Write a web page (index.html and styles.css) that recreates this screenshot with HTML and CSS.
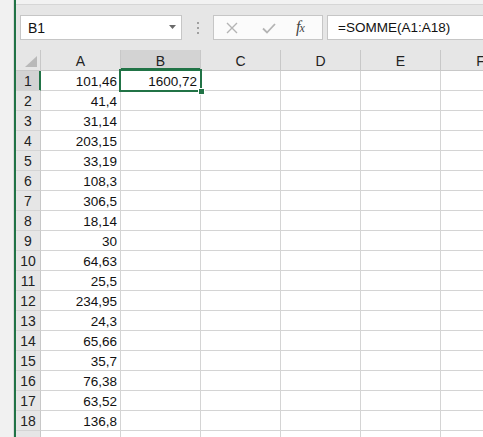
FILE: index.html
```html
<!DOCTYPE html>
<html lang="fr">
<head>
<meta charset="utf-8">
<title>Excel</title>
<link rel="stylesheet" href="styles.css">
</head>
<body>
<div class="app">
  <div class="side"></div>
  <div class="edge"></div>
  <div class="main">
    <div class="title"></div>
    <div class="fbar">
      <div class="namebox">
        <span class="nb-text">B1</span>
        <svg class="nb-arrow" width="7" height="4" viewBox="0 0 7 4"><polygon points="0,0 7,0 3.5,4" fill="#6a6a6a"/></svg>
      </div>
      <div class="dots"><i></i><i></i><i></i></div>
      <div class="btns">
        <svg class="ic-x" width="12" height="12" viewBox="0 0 12 12"><path d="M1 1 L11 11 M11 1 L1 11" stroke="#b4b4b4" stroke-width="1.4" fill="none"/></svg>
        <svg class="ic-ok" width="14" height="11" viewBox="0 0 14 11"><path d="M1 5.5 L5 9.5 L13 1" stroke="#b4b4b4" stroke-width="1.8" fill="none"/></svg>
        <span class="fx">f<span class="fx-x">x</span></span>
      </div>
      <div class="formula">=SOMME(A1:A18)</div>
    </div>
    <div class="sheet">
      <div class="grid">
        <div class="corner"><span class="tri"></span></div>
        <div class="ch">A</div>
        <div class="ch sel">B</div>
        <div class="ch">C</div>
        <div class="ch">D</div>
        <div class="ch">E</div>
        <div class="ch">F</div>

        <div class="rh sel">1</div><div class="c">101,46</div><div class="c">1600,72</div><div class="c"></div><div class="c"></div><div class="c"></div><div class="c"></div>
        <div class="rh">2</div><div class="c">41,4</div><div class="c"></div><div class="c"></div><div class="c"></div><div class="c"></div><div class="c"></div>
        <div class="rh">3</div><div class="c">31,14</div><div class="c"></div><div class="c"></div><div class="c"></div><div class="c"></div><div class="c"></div>
        <div class="rh">4</div><div class="c">203,15</div><div class="c"></div><div class="c"></div><div class="c"></div><div class="c"></div><div class="c"></div>
        <div class="rh">5</div><div class="c">33,19</div><div class="c"></div><div class="c"></div><div class="c"></div><div class="c"></div><div class="c"></div>
        <div class="rh">6</div><div class="c">108,3</div><div class="c"></div><div class="c"></div><div class="c"></div><div class="c"></div><div class="c"></div>
        <div class="rh">7</div><div class="c">306,5</div><div class="c"></div><div class="c"></div><div class="c"></div><div class="c"></div><div class="c"></div>
        <div class="rh">8</div><div class="c">18,14</div><div class="c"></div><div class="c"></div><div class="c"></div><div class="c"></div><div class="c"></div>
        <div class="rh">9</div><div class="c">30</div><div class="c"></div><div class="c"></div><div class="c"></div><div class="c"></div><div class="c"></div>
        <div class="rh">10</div><div class="c">64,63</div><div class="c"></div><div class="c"></div><div class="c"></div><div class="c"></div><div class="c"></div>
        <div class="rh">11</div><div class="c">25,5</div><div class="c"></div><div class="c"></div><div class="c"></div><div class="c"></div><div class="c"></div>
        <div class="rh">12</div><div class="c">234,95</div><div class="c"></div><div class="c"></div><div class="c"></div><div class="c"></div><div class="c"></div>
        <div class="rh">13</div><div class="c">24,3</div><div class="c"></div><div class="c"></div><div class="c"></div><div class="c"></div><div class="c"></div>
        <div class="rh">14</div><div class="c">65,66</div><div class="c"></div><div class="c"></div><div class="c"></div><div class="c"></div><div class="c"></div>
        <div class="rh">15</div><div class="c">35,7</div><div class="c"></div><div class="c"></div><div class="c"></div><div class="c"></div><div class="c"></div>
        <div class="rh">16</div><div class="c">76,38</div><div class="c"></div><div class="c"></div><div class="c"></div><div class="c"></div><div class="c"></div>
        <div class="rh">17</div><div class="c">63,52</div><div class="c"></div><div class="c"></div><div class="c"></div><div class="c"></div><div class="c"></div>
        <div class="rh">18</div><div class="c">136,8</div><div class="c"></div><div class="c"></div><div class="c"></div><div class="c"></div><div class="c"></div>
        <div class="rh"></div><div class="c"></div><div class="c"></div><div class="c"></div><div class="c"></div><div class="c"></div><div class="c"></div>
      </div>
      <div class="selection"><span class="handle"></span></div>
    </div>
  </div>
</div>
</body>
</html>
```

FILE: styles.css
```css
* { box-sizing: border-box; }
html, body {
  margin: 0;
  padding: 0;
  width: 483px;
  height: 437px;
  overflow: hidden;
  background: #ffffff;
  font-family: "Liberation Sans", Arial, sans-serif;
  font-size: 13.5px;
  color: #111;
}
.app {
  display: flex;
  height: 437px;
}
.side {
  width: 14px;
  flex: none;
  background: #f1f1f1;
  border-right: 1px solid #dcdcdc;
}
.edge {
  width: 2px;
  flex: none;
  background: #217346;
}
.main {
  flex: 1;
  min-width: 0;
  display: flex;
  flex-direction: column;
  overflow: hidden;
}
.title {
  height: 5px;
  flex: none;
  background: #f2f2f2;
  border-bottom: 1px solid #d6d6d6;
}
.fbar {
  flex: none;
  display: flex;
  align-items: center;
  background: #e6e6e6;
  padding: 10px 0 10px 4px;
  width: 500px;
}
.namebox {
  width: 162px;
  height: 25px;
  flex: none;
  background: #fff;
  border: 1px solid #c6c6c6;
  display: flex;
  align-items: center;
  justify-content: space-between;
  padding: 0 5px 0 7px;
  font-size: 14px;
  color: #111;
}
.nb-arrow { display: block; margin-top: -1px; }
.dots {
  width: 31px;
  flex: none;
  display: flex;
  flex-direction: column;
  align-items: center;
  gap: 3px;
}
.dots i {
  display: block;
  width: 2px;
  height: 2px;
  background: #a0a0a0;
}
.btns {
  width: 110px;
  height: 25px;
  flex: none;
  background: #fbfbfb;
  border: 1px solid #c6c6c6;
  display: flex;
  align-items: center;
  padding-left: 12px;
}
.ic-x { display: block; }
.ic-ok { display: block; margin-left: 24px; margin-top: 1px; }
.fx {
  margin-left: 20px;
  font-family: "Liberation Serif", "Times New Roman", serif;
  font-style: italic;
  font-size: 16px;
  color: #444;
  letter-spacing: -1px;
  margin-top: -2px;
}
.fx-x { font-size: 12px; }
.formula {
  flex: 1;
  height: 25px;
  margin-left: 4px;
  background: #fff;
  border: 1px solid #c6c6c6;
  border-right: none;
  display: flex;
  align-items: center;
  padding-left: 10px;
  font-size: 13.5px;
  color: #111;
  white-space: nowrap;
}
.sheet {
  position: relative;
  flex: 1;
}
.grid {
  display: grid;
  grid-template-columns: 25px repeat(6, 80px);
  grid-template-rows: 21px;
  grid-auto-rows: 20px;
}
.corner, .ch, .rh {
  background: #e6e6e6;
  color: #222;
  display: flex;
  align-items: center;
  justify-content: center;
  border-right: 1px solid #c8c8c8;
  border-bottom: 1px solid #c8c8c8;
  font-size: 14px;
}
.ch { padding-top: 1px; }
.rh { border-bottom-color: #d4d4d4; padding-top: 1px; }
.corner {
  position: relative;
}
.tri {
  position: absolute;
  right: 3px;
  bottom: 3px;
  width: 0;
  height: 0;
  border-left: 12px solid transparent;
  border-bottom: 11px solid #b9b9b9;
}
.ch.sel {
  background: #d3d3d3;
  box-shadow: inset 0 -2px 0 #217346;
}
.rh.sel {
  background: #d3d3d3;
  box-shadow: inset -1px 0 0 #217346;
  border-right-color: #217346;
}
.c {
  background: #fff;
  border-right: 1px solid #d4d4d4;
  border-bottom: 1px solid #d4d4d4;
  text-align: right;
  padding: 3px 3px 0 0;
  line-height: 16px;
  white-space: nowrap;
  color: #111;
}
.selection {
  position: absolute;
  left: 103px;
  top: 19px;
  width: 83px;
  height: 23px;
  border: 2px solid #217346;
  pointer-events: none;
}
.handle {
  position: absolute;
  right: -5px;
  bottom: -5px;
  width: 7px;
  height: 7px;
  background: #217346;
  border: 1px solid #fff;
}
```
